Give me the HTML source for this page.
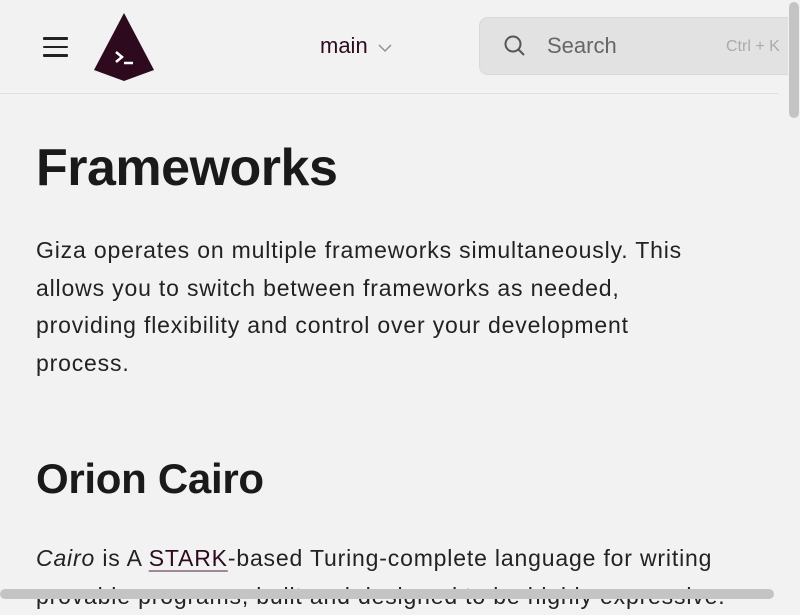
<!DOCTYPE html>
<html><head><meta charset="utf-8"><style>
html,body{margin:0;padding:0;width:800px;height:600px;overflow:hidden;background:#f2f2f2;font-family:"Liberation Sans",sans-serif;color:#1f1f1f}
.hdr{position:absolute;left:0;top:0;width:778px;height:93px;border-bottom:1px solid #e0e0e0}
.ham{position:absolute;left:43px;top:37px;width:25px}
.ham div{height:2.5px;background:#222;margin-bottom:6px;border-radius:1px}
.main{position:absolute;left:320px;top:33px;font-size:22px;color:#2d0a1e}
.srch{position:absolute;left:479px;top:17px;width:330px;height:56px;background:#e2e2e2;border:1px solid #d8d8d8;border-radius:9px}
.srch .t{position:absolute;left:67px;top:15px;font-size:22px;color:#666}
.srch .k{position:absolute;left:246px;top:20px;font-size:16px;color:#aaa}
h1{position:absolute;left:36px;top:138px;margin:0;font-size:52px;font-weight:bold;color:#1a1a1a;letter-spacing:-0.5px}
h2{position:absolute;left:36px;top:455px;margin:0;font-size:42px;font-weight:bold;color:#1a1a1a;letter-spacing:-0.3px}
p{position:absolute;left:36px;margin:0;font-size:23px;line-height:37.6px;letter-spacing:0.83px;width:760px;white-space:nowrap;color:#222}
a{color:#2d0a1e;text-decoration:underline;text-decoration-color:#a08896;text-underline-offset:4px}
.vs{position:absolute;left:788px;top:0;width:12px;height:600px;background:#f2f2f2}
.vs div{position:absolute;left:1px;top:2px;width:10px;height:116px;background:#c4c4c4;border-radius:5px}
.hs{position:absolute;left:0;top:589px;width:774px;height:10px;background:#c4c4c4;border-radius:5px}
</style></head><body>
<div class="hdr">
<div class="ham"><div></div><div></div><div></div></div>
<svg style="position:absolute;left:93px;top:12px" width="62" height="70" viewBox="0 0 62 70"><polygon points="31,1 61,58 31,69 1,58" fill="#2d0a1e"/><path d="M23 40 L29 45 L23 50" stroke="#fff" stroke-width="2.5" fill="none"/><path d="M31 51 H40" stroke="#fff" stroke-width="2.5"/></svg>
<div class="main">main <svg width="14" height="10" viewBox="0 0 14 10" style="margin-left:4px"><path d="M1 2 L7 8 L13 2" stroke="#a08896" stroke-width="1.5" fill="none"/></svg></div>
<div class="srch"><svg style="position:absolute;left:23px;top:16px" width="24" height="24" viewBox="0 0 24 24"><circle cx="10" cy="10" r="7.5" stroke="#555" stroke-width="2" fill="none"/><path d="M15.5 15.5 L21 21" stroke="#555" stroke-width="2"/></svg><span class="t">Search</span><span class="k">Ctrl + K</span></div>
</div>
<h1>Frameworks</h1>
<p style="top:232px">Giza operates on multiple frameworks simultaneously. This<br>allows you to switch between frameworks as needed,<br>providing flexibility and control over your development<br>process.</p>
<h2>Orion Cairo</h2>
<p style="top:540px"><i>Cairo</i> is A <a>STARK</a>-based Turing-complete language for writing<br>provable programs, built and designed to be highly expressive.</p>
<div class="vs"><div></div></div>
<div class="hs"></div>
</body></html>
